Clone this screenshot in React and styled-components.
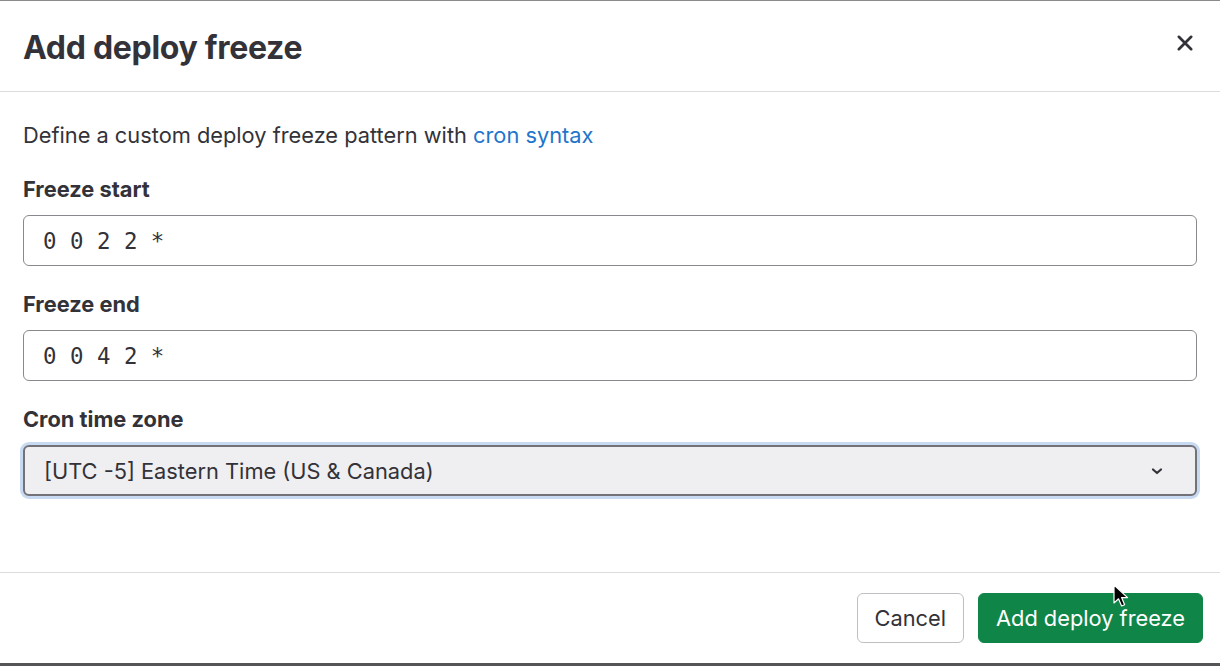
import React from "react";
import styled, { createGlobalStyle } from "styled-components";

const GlobalStyle = createGlobalStyle`
  html, body {
    margin: 0;
    padding: 0;
    background: #fff;
  }
  body {
    font-family: Inter, "Liberation Sans", Arial, sans-serif;
    color: #333238;
  }
`;

function CloseIcon() {
  return (
    <svg width="18" height="18" viewBox="0 0 16 16">
      <path
        d="M2.5 2.5 L13.5 13.5 M13.5 2.5 L2.5 13.5"
        stroke="#333238"
        strokeWidth="2.4"
        strokeLinecap="round"
        fill="none"
      />
    </svg>
  );
}

function ChevronDown() {
  return (
    <svg width="16" height="16" viewBox="0 0 16 16">
      <path
        d="M4 6.5 L8 10 L12 6.5"
        stroke="#333238"
        strokeWidth="2.2"
        strokeLinecap="round"
        strokeLinejoin="round"
        fill="none"
      />
    </svg>
  );
}

function Cursor() {
  return (
    <svg width="18" height="26" viewBox="0 0 18 26">
      <path
        d="M1 1 L1 19 L5.5 14.8 L8.6 22 L11.6 20.7 L8.6 13.6 L14.6 13.6 Z"
        fill="#000"
        stroke="#fff"
        strokeWidth="1.2"
        strokeLinejoin="round"
      />
    </svg>
  );
}

export default function App() {
  return (
    <>
      <GlobalStyle />
      <Modal>
        <Header>
          <Title>Add deploy freeze</Title>
          <CloseButton aria-label="Close">
            <CloseIcon />
          </CloseButton>
        </Header>
        <Body>
          <Intro>
            Define a custom deploy freeze pattern with <Link href="#">cron syntax</Link>
          </Intro>
          <Field>
            <Label>Freeze start</Label>
            <Input value="0 0 2 2 *" readOnly />
          </Field>
          <Field>
            <Label>Freeze end</Label>
            <Input value="0 0 4 2 *" readOnly />
          </Field>
          <Field>
            <Label>Cron time zone</Label>
            <Select>
              <span>[UTC -5] Eastern Time (US &amp; Canada)</span>
              <ChevronDown />
            </Select>
          </Field>
        </Body>
        <Footer>
          <Button>Cancel</Button>
          <Button $primary>
            Add deploy freeze
            <CursorWrap>
              <Cursor />
            </CursorWrap>
          </Button>
        </Footer>
      </Modal>
    </>
  );
}

const Modal = styled.div`
  display: flex;
  flex-direction: column;
  width: 1220px;
  height: 666px;
  box-sizing: border-box;
  border-top: 1px solid #8a8a8a;
  border-bottom: 3px solid #555558;
  background: #fff;
  overflow: hidden;
`;

const Header = styled.header`
  display: flex;
  align-items: center;
  justify-content: space-between;
  height: 90px;
  padding: 0 20px 0 23px;
  border-bottom: 1px solid #dcdcde;
  flex-shrink: 0;
`;

const Title = styled.h2`
  margin: 0;
  font-size: 32px;
  font-weight: 700;
  letter-spacing: -0.3px;
  color: #333238;
  line-height: 1;
  padding-top: 4px;
`;

const CloseButton = styled.button`
  display: flex;
  align-items: center;
  justify-content: center;
  width: 30px;
  height: 30px;
  margin-bottom: 6px;
  padding: 0;
  border: 0;
  background: transparent;
  cursor: pointer;
`;

const Body = styled.main`
  flex: 1;
  padding: 28px 23px 0 23px;
`;

const Intro = styled.p`
  margin: 0 0 23px;
  font-size: 21.8px;
  line-height: 31px;
  color: #333238;
`;

const Link = styled.a`
  color: #1f75cb;
  text-decoration: none;
`;

const Field = styled.div`
  display: flex;
  flex-direction: column;
  gap: 10px;
  margin-bottom: 23px;
`;

const Label = styled.label`
  font-size: 21.8px;
  font-weight: 700;
  line-height: 31px;
  color: #333238;
`;

const Input = styled.input`
  box-sizing: border-box;
  width: 100%;
  height: 51px;
  padding: 0 19px;
  border: 1px solid #89888d;
  border-radius: 6px;
  font-family: "DejaVu Sans Mono", "Liberation Mono", monospace;
  font-size: 22.4px;
  color: #333238;
  background: #fff;
  outline: none;
`;

const Select = styled.div`
  box-sizing: border-box;
  display: flex;
  align-items: center;
  justify-content: space-between;
  width: 100%;
  height: 51px;
  padding: 0 30px 0 19px;
  border: 2px solid #737278;
  border-radius: 6px;
  background: #efeef0;
  box-shadow: 0 0 0 3px #c7daf2;
  font-size: 21.8px;
  color: #333238;
`;

const Footer = styled.footer`
  display: flex;
  justify-content: flex-end;
  align-items: center;
  gap: 14px;
  height: 90px;
  padding: 0 17px 0 24px;
  border-top: 1px solid #dcdcde;
  flex-shrink: 0;
`;

const Button = styled.button`
  position: relative;
  display: inline-flex;
  align-items: center;
  justify-content: center;
  height: 50px;
  padding: 0 17px;
  border-radius: 6px;
  font-family: Inter, "Liberation Sans", Arial, sans-serif;
  font-size: 21.8px;
  border: 1px solid ${(p) => (p.$primary ? "#108548" : "#bfbfc3")};
  background: ${(p) => (p.$primary ? "#108548" : "#fff")};
  color: ${(p) => (p.$primary ? "#fff" : "#333238")};
  cursor: pointer;
`;

const CursorWrap = styled.span`
  position: absolute;
  left: 134px;
  top: -10px;
  line-height: 0;
`;
